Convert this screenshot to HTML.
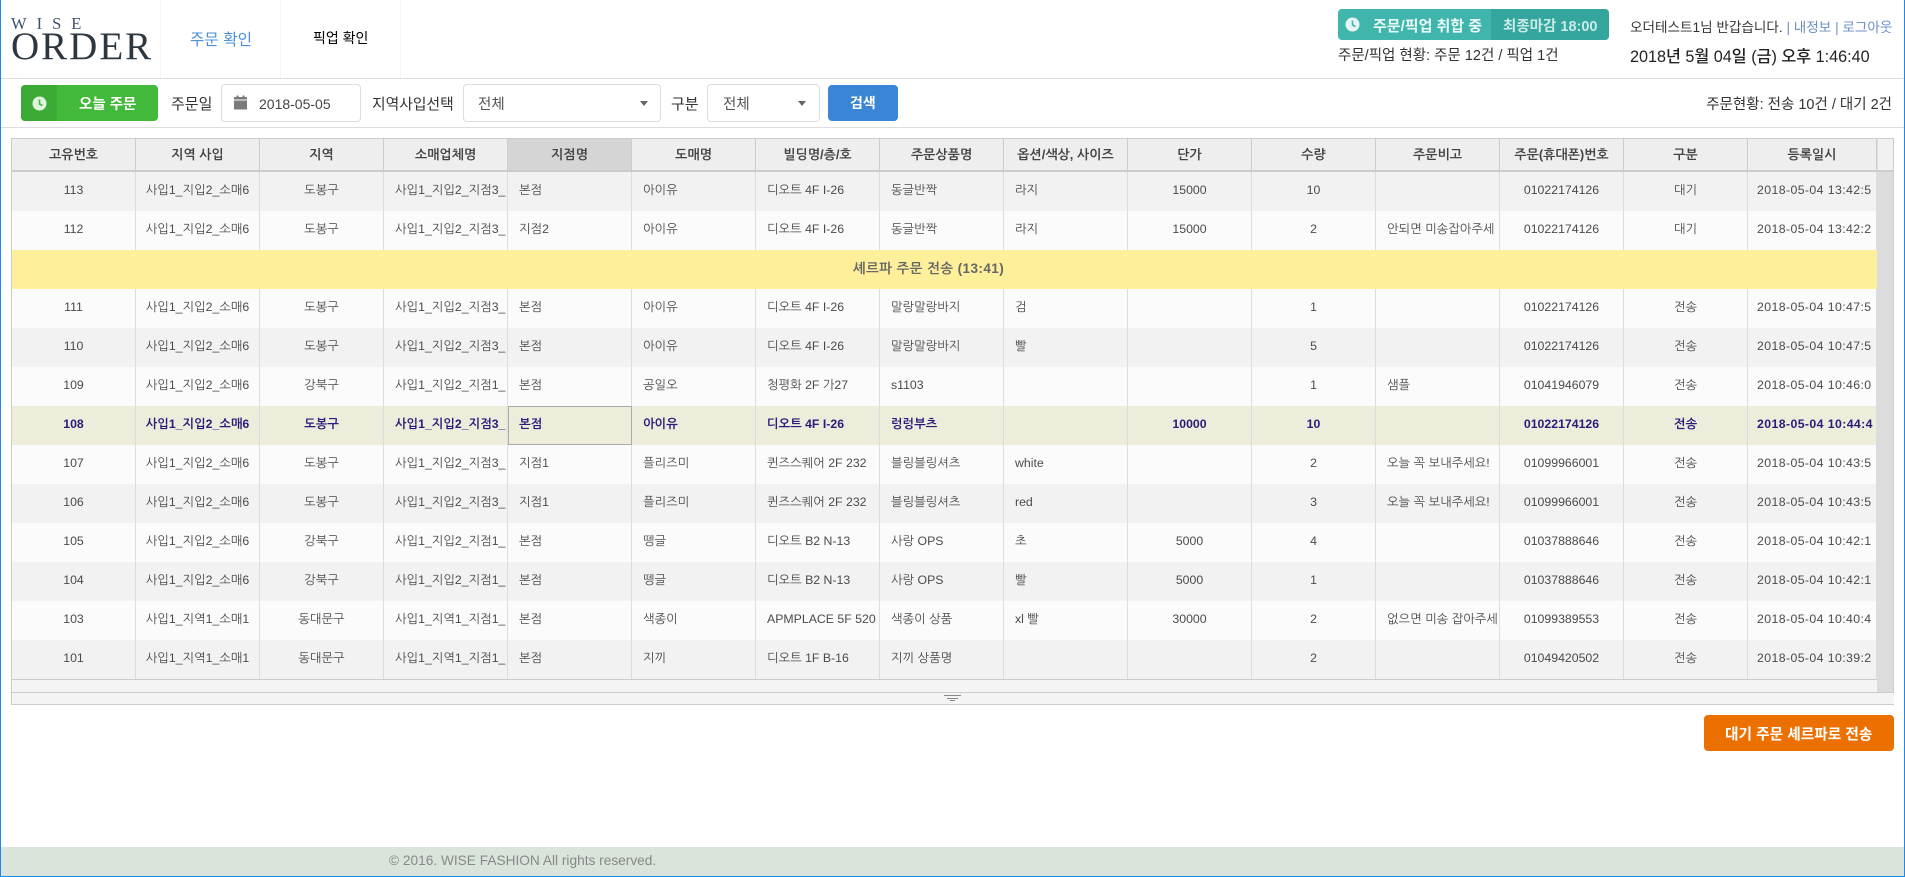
<!DOCTYPE html>
<html lang="ko"><head><meta charset="utf-8"><title>WISE ORDER</title>
<style>
*{box-sizing:border-box}
html,body{margin:0;padding:0;width:1905px;height:877px;overflow:hidden;background:#fff}
body{font-family:"Liberation Sans","NanumGothic","Noto Sans CJK KR",sans-serif;font-size:13px;color:#333;position:relative}
.a{position:absolute;white-space:nowrap}
.k{font-family:"Liberation Sans","Noto Sans CJK KR",sans-serif}
table{border-collapse:separate;border-spacing:0;table-layout:fixed;width:1866px;position:absolute;left:11px;top:138px}
col{width:124px}
col.f{width:125px}
col.z{width:129px}
th{height:34px;background:#eee;border-right:1px solid #ccc;border-bottom:2px solid #ccc;border-top:1px solid #ccc;font-size:13px;font-weight:bold;color:#444;padding:0;text-align:center;overflow:hidden;white-space:nowrap}
th:first-child{border-left:1px solid #ccc}
th.s{background:#d5d5d5}
td{height:39px;padding:0 0 3px 11px;font-size:12.3px;color:#4a4a4a;border-right:1px solid #ddd;overflow:hidden;white-space:nowrap;text-align:left}
td:first-child{border-left:1px solid #ccc}
td.c{text-align:center;padding-left:0}
td.l{text-align:left;padding:0 0 3px 11px}
td.d{text-align:left;padding:0 0 3px 9px;letter-spacing:.4px}
tr.o td{background:#f2f2f2}
tr.e td{background:#fbfbfb}
tr.y td{background:#fef09a;text-align:center;font-weight:bold;font-size:13.6px;letter-spacing:.4px;color:#666;border-right:none;padding:0 32px 3px 0}
tr.h td{background:#eeecda;font-weight:bold;color:#2b1c7c}
tr.h td.sel{outline:1px solid #aaa;outline-offset:-1px}
</style></head><body>
<div class="a" style="left:0;top:0;width:1px;height:877px;background:#1e88e5"></div>
<div class="a" style="right:0;top:0;width:1px;height:877px;background:#1e88e5"></div>

<div class="a" style="left:11px;top:16px;font:16.5px/16px 'Liberation Serif',serif;letter-spacing:10px;color:#3f5070">WISE</div>
<div class="a" style="left:11px;top:29px;font:39px/36px 'Liberation Serif',serif;letter-spacing:2px;color:#2c3742">ORDER</div>
<div class="a" style="left:160px;top:0;width:121px;height:78px;border-left:1px solid #f5f5f5;border-right:1px solid #f5f5f5"></div>
<div class="a" style="left:280px;top:0;width:121px;height:78px;border-right:1px solid #f5f5f5"></div>
<div class="a k" style="left:190px;top:27px;font-size:15.7px;color:#4a90d9">주문 확인</div>
<div class="a k" style="left:313px;top:28px;font-size:14px;font-weight:normal;color:#000">픽업 확인</div>

<div class="a" style="left:1338px;top:9px;width:271px;height:31px;background:#3fb5ab;border-radius:4px;overflow:hidden">
<div style="position:absolute;left:153px;top:0;width:118px;height:31px;background:#34a69d"></div></div>
<svg class="a" style="left:1345px;top:17px" width="15" height="15" viewBox="0 0 15 15"><circle cx="7.5" cy="7.5" r="7" fill="#e6f6f4"/><path d="M7.5 3.500V8l3 1.500" stroke="#3fb5ab" stroke-width="1.600" fill="none"/></svg>
<div class="a k" style="left:1373px;top:15px;font-size:15px;font-weight:bold;color:#eafaf8">주문/픽업 취합 중</div>
<div class="a k" style="left:1503px;top:15px;font-size:14.500px;font-weight:bold;color:#c9ece8">최종마감 18:00</div>
<div class="a k" style="left:1338px;top:44px;font-size:14.500px;color:#333">주문/픽업 현황: 주문 12건 / 픽업 1건</div>
<div class="a k" style="left:1630px;top:16px;font-size:13.600px;color:#333">오더테스트1님 반갑습니다. <span style="color:#6a8fc8">| 내정보 | 로그아웃</span></div>
<div class="a k" style="left:1630px;top:43px;font-size:16.200px;font-weight:500;color:#222">2018년 5월 04일 (금) 오후 1:46:40</div>

<div class="a" style="left:1px;top:78px;width:1903px;height:1px;background:#ddd"></div>
<div class="a" style="left:1px;top:127px;width:1903px;height:1px;background:#ddd"></div>

<div class="a" style="left:21px;top:85px;width:137px;height:36px;background:#43b93c;border-radius:4px;overflow:hidden"><div style="width:36px;height:36px;background:#3cab36"></div></div>
<svg class="a" style="left:32px;top:96px" width="15" height="15" viewBox="0 0 15 15"><circle cx="7.5" cy="7.5" r="7" fill="#dff3dd"/><path d="M7.5 3.500V8l3 1.500" stroke="#43b93c" stroke-width="1.600" fill="none"/></svg>
<div class="a k" style="left:79px;top:93px;font-size:14.500px;font-weight:bold;color:#fff">오늘 주문</div>
<div class="a k" style="left:171px;top:93px;font-size:15px;color:#333">주문일</div>
<div class="a" style="left:221px;top:84px;width:140px;height:38px;border:1px solid #ddd;border-radius:4px"></div>
<svg class="a" style="left:234px;top:95px" width="13" height="15" viewBox="0 0 13 15"><path d="M0 2h13v2.500H0zM0 5.500h13V14.500H0zM2.500 .5h2v2h-2zM8.500 .5h2v2h-2z" fill="#7b7b7b"/></svg>
<div class="a" style="left:259px;top:96px;font-size:14px;color:#444">2018-05-05</div>
<div class="a k" style="left:372px;top:93px;font-size:14.800px;color:#333">지역사입선택</div>
<div class="a" style="left:463px;top:84px;width:198px;height:38px;border:1px solid #ddd;border-radius:4px"></div>
<div class="a k" style="left:478px;top:93px;font-size:14.500px;color:#555">전체</div>
<div class="a" style="left:640px;top:101px;border:4px solid transparent;border-top:5px solid #666;border-bottom:0"></div>
<div class="a k" style="left:671px;top:93px;font-size:15px;color:#333">구분</div>
<div class="a" style="left:707px;top:84px;width:113px;height:38px;border:1px solid #ddd;border-radius:4px"></div>
<div class="a k" style="left:723px;top:93px;font-size:14.500px;color:#555">전체</div>
<div class="a" style="left:798px;top:101px;border:4px solid transparent;border-top:5px solid #666;border-bottom:0"></div>
<div class="a" style="left:828px;top:85px;width:70px;height:36px;background:#3a85d6;border-radius:4px"></div>
<div class="a k" style="left:850px;top:93px;font-size:14px;font-weight:bold;color:#fff">검색</div>
<div class="a k" style="right:13px;top:93px;font-size:14.500px;color:#333">주문현황: 전송 10건 / 대기 2건</div>

<table>
<colgroup><col class="f"><col><col><col><col><col><col><col><col><col><col><col><col><col><col class="z"></colgroup>
<thead><tr><th>고유번호</th><th>지역 사입</th><th>지역</th><th>소매업체명</th><th class="s">지점명</th><th>도매명</th><th>빌딩명/층/호</th><th>주문상품명</th><th>옵션/색상, 사이즈</th><th>단가</th><th>수량</th><th>주문비고</th><th>주문(휴대폰)번호</th><th>구분</th><th>등록일시</th></tr></thead>
<tbody>
<tr class="o"><td class="c">113</td><td class="c">사입1_지입2_소매6</td><td class="c">도봉구</td><td class="l">사입1_지입2_지점3_</td><td>본점</td><td>아이유</td><td>디오트 4F I-26</td><td>동글반짝</td><td>라지</td><td class="c">15000</td><td class="c">10</td><td></td><td class="c">01022174126</td><td class="c">대기</td><td class="d">2018-05-04 13:42:5</td></tr>
<tr class="e"><td class="c">112</td><td class="c">사입1_지입2_소매6</td><td class="c">도봉구</td><td class="l">사입1_지입2_지점3_</td><td>지점2</td><td>아이유</td><td>디오트 4F I-26</td><td>동글반짝</td><td>라지</td><td class="c">15000</td><td class="c">2</td><td>안되면 미송잡아주세</td><td class="c">01022174126</td><td class="c">대기</td><td class="d">2018-05-04 13:42:2</td></tr>
<tr class="y"><td colspan="15">셰르파 주문 전송 (13:41)</td></tr>
<tr class="e"><td class="c">111</td><td class="c">사입1_지입2_소매6</td><td class="c">도봉구</td><td class="l">사입1_지입2_지점3_</td><td>본점</td><td>아이유</td><td>디오트 4F I-26</td><td>말랑말랑바지</td><td>검</td><td class="c"></td><td class="c">1</td><td></td><td class="c">01022174126</td><td class="c">전송</td><td class="d">2018-05-04 10:47:5</td></tr>
<tr class="o"><td class="c">110</td><td class="c">사입1_지입2_소매6</td><td class="c">도봉구</td><td class="l">사입1_지입2_지점3_</td><td>본점</td><td>아이유</td><td>디오트 4F I-26</td><td>말랑말랑바지</td><td>빨</td><td class="c"></td><td class="c">5</td><td></td><td class="c">01022174126</td><td class="c">전송</td><td class="d">2018-05-04 10:47:5</td></tr>
<tr class="e"><td class="c">109</td><td class="c">사입1_지입2_소매6</td><td class="c">강북구</td><td class="l">사입1_지입2_지점1_</td><td>본점</td><td>공일오</td><td>청평화 2F 가27</td><td>s1103</td><td></td><td class="c"></td><td class="c">1</td><td>샘플</td><td class="c">01041946079</td><td class="c">전송</td><td class="d">2018-05-04 10:46:0</td></tr>
<tr class="h"><td class="c">108</td><td class="c">사입1_지입2_소매6</td><td class="c">도봉구</td><td class="l">사입1_지입2_지점3_</td><td class="sel">본점</td><td>아이유</td><td>디오트 4F I-26</td><td>렁렁부츠</td><td></td><td class="c">10000</td><td class="c">10</td><td></td><td class="c">01022174126</td><td class="c">전송</td><td class="d">2018-05-04 10:44:4</td></tr>
<tr class="e"><td class="c">107</td><td class="c">사입1_지입2_소매6</td><td class="c">도봉구</td><td class="l">사입1_지입2_지점3_</td><td>지점1</td><td>플리즈미</td><td>퀸즈스퀘어 2F 232</td><td>블링블링셔츠</td><td>white</td><td class="c"></td><td class="c">2</td><td>오늘 꼭 보내주세요!</td><td class="c">01099966001</td><td class="c">전송</td><td class="d">2018-05-04 10:43:5</td></tr>
<tr class="o"><td class="c">106</td><td class="c">사입1_지입2_소매6</td><td class="c">도봉구</td><td class="l">사입1_지입2_지점3_</td><td>지점1</td><td>플리즈미</td><td>퀸즈스퀘어 2F 232</td><td>블링블링셔츠</td><td>red</td><td class="c"></td><td class="c">3</td><td>오늘 꼭 보내주세요!</td><td class="c">01099966001</td><td class="c">전송</td><td class="d">2018-05-04 10:43:5</td></tr>
<tr class="e"><td class="c">105</td><td class="c">사입1_지입2_소매6</td><td class="c">강북구</td><td class="l">사입1_지입2_지점1_</td><td>본점</td><td>뗑글</td><td>디오트 B2 N-13</td><td>사랑 OPS</td><td>초</td><td class="c">5000</td><td class="c">4</td><td></td><td class="c">01037888646</td><td class="c">전송</td><td class="d">2018-05-04 10:42:1</td></tr>
<tr class="o"><td class="c">104</td><td class="c">사입1_지입2_소매6</td><td class="c">강북구</td><td class="l">사입1_지입2_지점1_</td><td>본점</td><td>뗑글</td><td>디오트 B2 N-13</td><td>사랑 OPS</td><td>빨</td><td class="c">5000</td><td class="c">1</td><td></td><td class="c">01037888646</td><td class="c">전송</td><td class="d">2018-05-04 10:42:1</td></tr>
<tr class="e"><td class="c">103</td><td class="c">사입1_지역1_소매1</td><td class="c">동대문구</td><td class="l">사입1_지역1_지점1_</td><td>본점</td><td>색종이</td><td>APMPLACE 5F 520</td><td>색종이 상품</td><td>xl 빨</td><td class="c">30000</td><td class="c">2</td><td>없으면 미송 잡아주세</td><td class="c">01099389553</td><td class="c">전송</td><td class="d">2018-05-04 10:40:4</td></tr>
<tr class="o"><td class="c">101</td><td class="c">사입1_지역1_소매1</td><td class="c">동대문구</td><td class="l">사입1_지역1_지점1_</td><td>본점</td><td>지끼</td><td>디오트 1F B-16</td><td>지끼 상품명</td><td></td><td class="c"></td><td class="c">2</td><td></td><td class="c">01049420502</td><td class="c">전송</td><td class="d">2018-05-04 10:39:2</td></tr>
</tbody></table>

<div class="a" style="left:1877px;top:138px;width:17px;height:34px;background:#f1f1f1;border:1px solid #ccc;border-left:1px solid #ddd;border-bottom:2px solid #ccc"></div>
<div class="a" style="left:1877px;top:172px;width:16px;height:520px;background:#dcdcdc"></div>
<div class="a" style="left:1893px;top:172px;width:1px;height:533px;background:#ccc"></div>
<div class="a" style="left:11px;top:679px;width:1866px;height:13px;background:#f4f4f4;border-top:1px solid #ccc"></div>
<div class="a" style="left:11px;top:692px;width:1883px;height:13px;background:#f4f4f4;border-top:1px solid #ccc;border-bottom:1px solid #ccc"></div>
<div class="a" style="left:11px;top:679px;width:1px;height:26px;background:#ccc"></div>
<div class="a" style="left:944px;top:695px;width:17px;height:1px;background:#888"></div>
<div class="a" style="left:947px;top:698px;width:11px;height:1px;background:#888"></div>
<div class="a" style="left:950px;top:700px;width:5px;height:1px;background:#888"></div>

<div class="a" style="left:1704px;top:715px;width:190px;height:36px;background:#ec7000;border-radius:4px"></div>
<div class="a k" style="left:1725px;top:723px;font-size:14.700px;font-weight:bold;color:#fff">대기 주문 셰르파로 전송</div>

<div class="a" style="left:1px;top:847px;width:1903px;height:29px;background:#d9e4da"></div>
<div class="a" style="left:0;top:876px;width:1905px;height:1px;background:#1e88e5"></div>
<div class="a" style="left:389px;top:853px;font-size:13.700px;color:#888">© 2016. WISE FASHION All rights reserved.</div>
</body></html>
